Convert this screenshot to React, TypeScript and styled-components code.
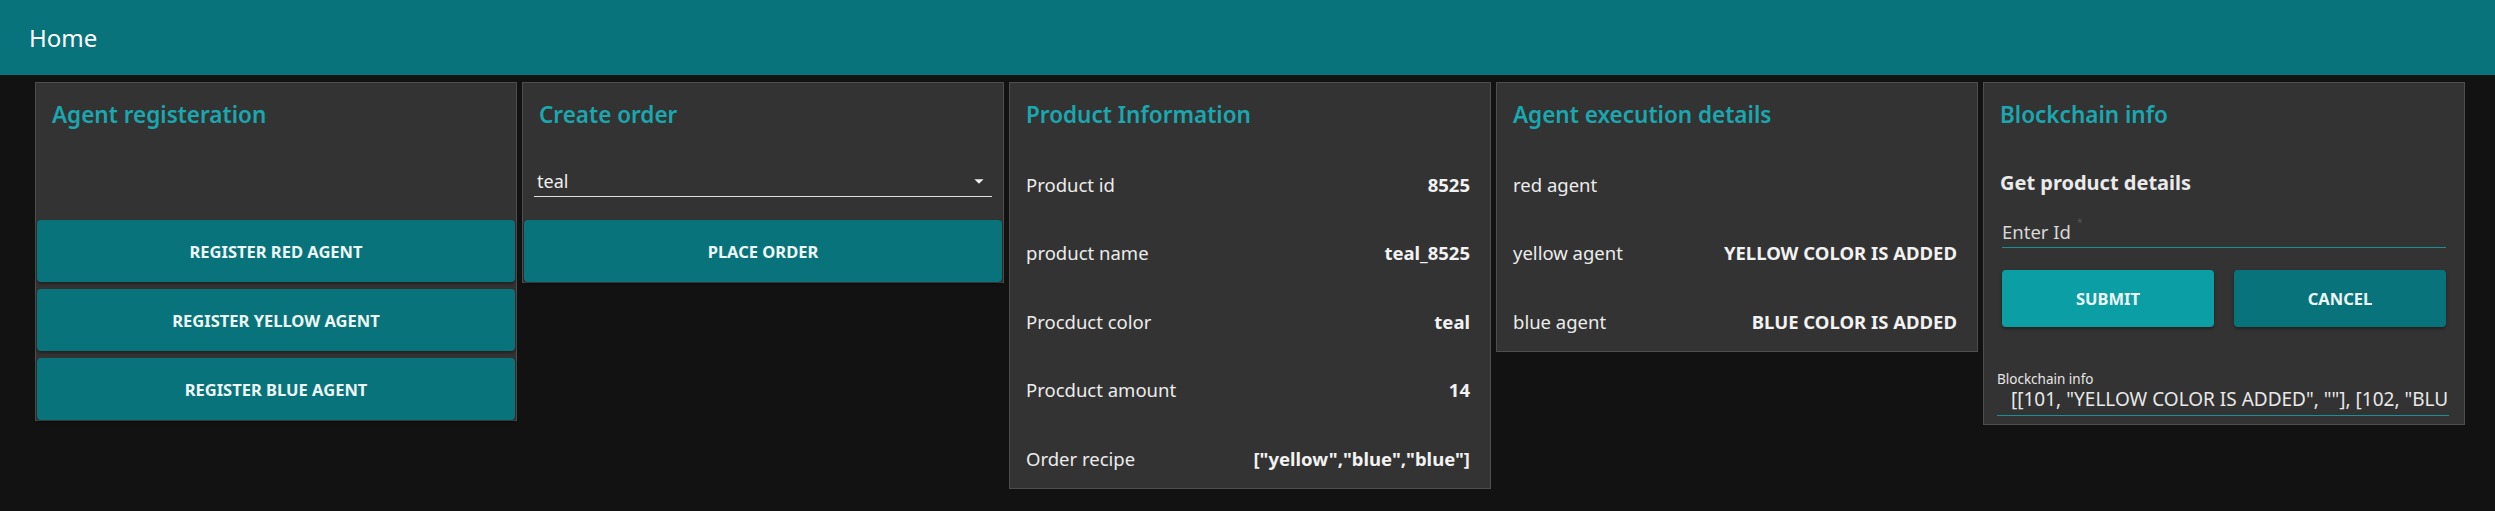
import styled, { createGlobalStyle } from "styled-components";

const GlobalStyle = createGlobalStyle`
    body {
        margin: 0;
        background: #121212;
        font-family: "Noto Sans", "Open Sans", sans-serif;
        color: #e8e8e8;
        overflow: hidden;
    }
`;

const TopBar = styled.header`
    height: 75px;
    background: #08737a;
    display: flex;
    align-items: center;
    padding-left: 29px;
    font-size: 24px;
    color: #ffffff;
`;

const Board = styled.main`
    display: flex;
    align-items: flex-start;
    gap: 5px;
    padding: 7px 28px 0 35px;
`;

const Card = styled.section`
    flex: 0 0 482px;
    width: 482px;
    box-sizing: border-box;
    background: #333333;
    border: 1px solid #4e4e4e;
    display: flex;
    flex-direction: column;
`;

const CardTitle = styled.h2`
    margin: 0;
    padding: 16px;
    font-size: 22.5px;
    line-height: 32px;
    font-weight: 600;
    color: #1ba7af;
`;

const CardBody = styled.div`
    height: 73px;
    padding: 0 11px 23px;
    display: flex;
    align-items: flex-end;
    box-sizing: border-box;
`;

const ActionButton = styled.button<{ $light?: boolean }>`
    border: none;
    border-radius: 4px;
    background: ${(p) => (p.$light ? "#0b9ea5" : "#08737a")};
    color: #eef8f8;
    font-family: inherit;
    font-weight: 700;
    font-size: 16.5px;
    text-transform: uppercase;
    height: 62px;
    box-shadow: 0 2px 3px rgba(0, 0, 0, 0.35);
    cursor: pointer;
`;

const ButtonStack = styled.div`
    display: flex;
    flex-direction: column;
    gap: 7px;
    padding: 0 1px;
`;

const SelectBox = styled.div`
    flex: 1;
    height: 30px;
    border-bottom: 1px solid #e0e0e0;
    display: flex;
    align-items: center;
    justify-content: space-between;
    padding: 0 2px 0 3px;
    font-size: 18px;
    color: #f0f0f0;
`;

const InfoList = styled.ul`
    list-style: none;
    margin: 0;
    padding: 7px 0 0;
    display: flex;
    flex-direction: column;
    gap: 8.5px;
`;

const InfoRow = styled.li`
    height: 60px;
    display: flex;
    align-items: center;
    justify-content: space-between;
    padding: 0 20px 0 16px;
    font-size: 18.5px;
    color: #ececec;
`;

const InfoValue = styled.span`
    font-weight: 700;
    color: #f2f2f2;
`;

const Section = styled.div`
    padding: 0 18px 8px 16px;
    display: flex;
    flex-direction: column;
`;

const SubTitle = styled.h3`
    margin: 21px 0 0;
    font-size: 20px;
    line-height: 30px;
    font-weight: 700;
    color: #eaeaea;
`;

const TextField = styled.label`
    margin: 17px 0 0 2px;
    display: flex;
    align-items: center;
    height: 32px;
    border-bottom: 1px solid #1a8f96;
    font-size: 18.5px;
    color: #d8d8d8;
    sup {
        font-size: 10px;
        color: #555;
        margin-left: 6px;
        align-self: flex-start;
    }
`;

const ButtonRow = styled.div`
    display: grid;
    grid-template-columns: 1fr 1fr;
    gap: 20px;
    margin: 22px 0 0 2px;
    ${ActionButton} {
        height: 57px;
    }
`;

const OutputField = styled.div`
    margin: 44px -3px 0 -3px;
    display: flex;
    flex-direction: column;
    border-bottom: 1px solid #1a8f96;
    padding-bottom: 4px;
`;

const OutputLabel = styled.span`
    font-size: 13.5px;
    line-height: 16px;
    color: #e6e6e6;
`;

const OutputValue = styled.input`
    background: transparent;
    border: none;
    outline: none;
    padding: 0 0 0 14px;
    font-family: inherit;
    font-size: 19px;
    line-height: 24px;
    color: #e8e8e8;
    width: 100%;
    box-sizing: border-box;
`;

const product = [
    ["Product id", "8525"],
    ["product name", "teal_8525"],
    ["Procduct color", "teal"],
    ["Procduct amount", "14"],
    ["Order recipe", '["yellow","blue","blue"]'],
];

const agents = [
    ["red agent", ""],
    ["yellow agent", "YELLOW COLOR IS ADDED"],
    ["blue agent", "BLUE COLOR IS ADDED"],
];

function App() {
    return (
        <>
            <GlobalStyle />
            <TopBar>Home</TopBar>
            <Board>
                <Card>
                    <CardTitle>Agent registeration</CardTitle>
                    <CardBody />
                    <ButtonStack>
                        <ActionButton>Register red agent</ActionButton>
                        <ActionButton>Register yellow agent</ActionButton>
                        <ActionButton>Register blue agent</ActionButton>
                    </ButtonStack>
                </Card>

                <Card>
                    <CardTitle>Create order</CardTitle>
                    <CardBody>
                        <SelectBox>
                            <span>teal</span>
                            <svg width="22" height="22" viewBox="0 0 24 24">
                                <path d="M7 10l5 5 5-5z" fill="#f0f0f0" />
                            </svg>
                        </SelectBox>
                    </CardBody>
                    <ButtonStack>
                        <ActionButton>Place order</ActionButton>
                    </ButtonStack>
                </Card>

                <Card>
                    <CardTitle>Product Information</CardTitle>
                    <InfoList>
                        {product.map(([k, v]) => (
                            <InfoRow key={k}>
                                <span>{k}</span>
                                <InfoValue>{v}</InfoValue>
                            </InfoRow>
                        ))}
                    </InfoList>
                </Card>

                <Card>
                    <CardTitle>Agent execution details</CardTitle>
                    <InfoList>
                        {agents.map(([k, v]) => (
                            <InfoRow key={k}>
                                <span>{k}</span>
                                <InfoValue>{v}</InfoValue>
                            </InfoRow>
                        ))}
                    </InfoList>
                </Card>

                <Card>
                    <CardTitle>Blockchain info</CardTitle>
                    <Section>
                        <SubTitle>Get product details</SubTitle>
                        <TextField>
                            Enter Id<sup>*</sup>
                        </TextField>
                        <ButtonRow>
                            <ActionButton $light>Submit</ActionButton>
                            <ActionButton>Cancel</ActionButton>
                        </ButtonRow>
                        <OutputField>
                            <OutputLabel>Blockchain info</OutputLabel>
                            <OutputValue
                                readOnly
                                value={'[[101, "YELLOW COLOR IS ADDED", ""], [102, "BLUE COLOR IS ADDED", ""]]'}
                            />
                        </OutputField>
                    </Section>
                </Card>
            </Board>
        </>
    );
}

export default App;
